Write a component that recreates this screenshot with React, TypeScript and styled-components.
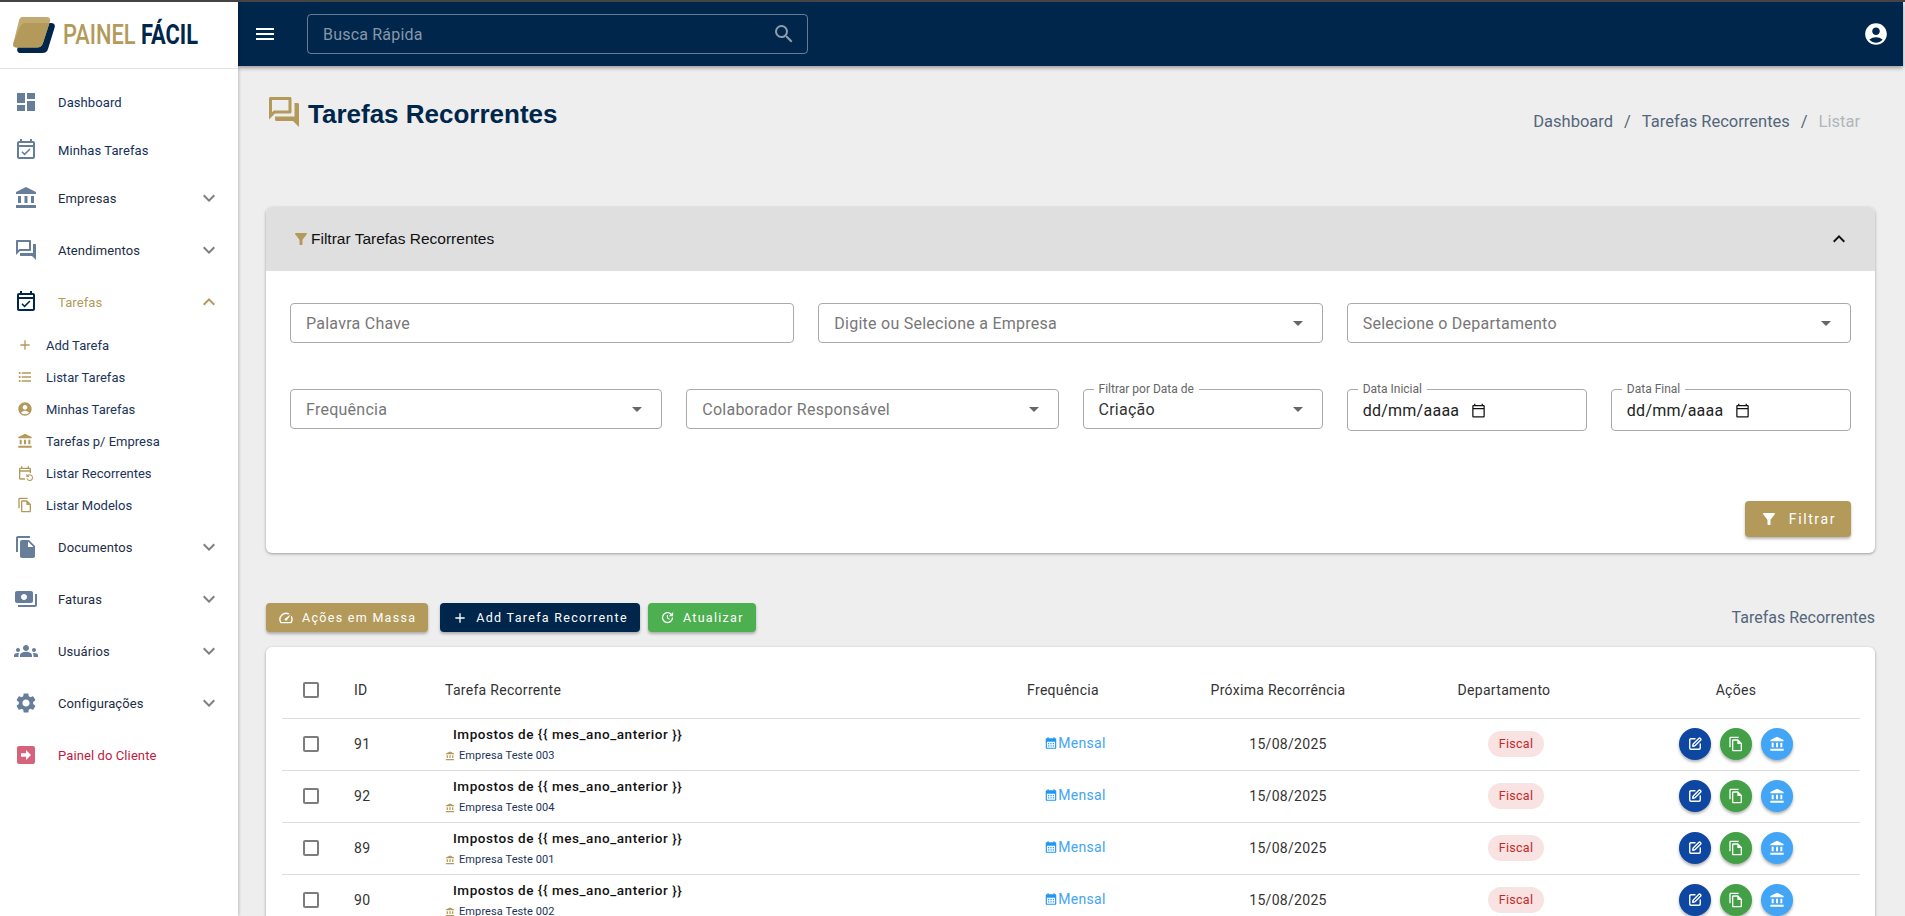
import React from 'react';
import styled, { createGlobalStyle } from 'styled-components';
import {
  MdDashboard,
  MdOutlineEventAvailable,
  MdAccountBalance,
  MdOutlineForum,
  MdAdd,
  MdFormatListBulleted,
  MdAccountCircle,
  MdOutlineEventRepeat,
  MdOutlineFileCopy,
  MdFileCopy,
  MdPayments,
  MdGroups,
  MdSettings,
  MdExpandMore,
  MdExpandLess,
  MdMenu,
  MdSearch,
  MdFilterAlt,
  MdArrowDropDown,
  MdOutlineCalendarToday,
  MdOutlineSpeed,
  MdUpdate,
  MdCalendarMonth,
} from 'react-icons/md';
import { SquarePen } from 'lucide-react';

const gold = '#b39a5b';
const navy = '#00264b';

const GlobalStyle = createGlobalStyle`
  html, body {
    margin: 0;
    height: 100%;
    overflow: hidden;
    background: #eeeeee;
    font-family: Roboto, "Liberation Sans", sans-serif;
  }
  * { box-sizing: border-box; }
`;

const Page = styled.div`
  height: 916px;
  overflow: hidden;
  border-top: 2px solid #444444;
  display: grid;
  grid-template-columns: 238px 1fr;
`;

const Sidebar = styled.aside`
  background: #ffffff;
  height: 914px;
  box-shadow: 1px 0 3px rgba(0, 0, 0, 0.2);
  z-index: 2;
`;

const LogoBar = styled.div`
  height: 67px;
  border-bottom: 1px solid #e2e2e2;
  display: flex;
  align-items: center;
  padding-left: 13px;
  gap: 8px;
  margin-bottom: 9px;
`;

const LogoText = styled.span`
  display: inline-block;
  font-size: 28px;
  font-weight: 500;
  line-height: 1;
  white-space: nowrap;
  color: ${gold};
  transform: scaleX(0.78);
  transform-origin: left center;
  b {
    color: ${navy};
    font-weight: 700;
    margin-left: 7px;
  }
`;

const NavItem = styled.div<{ $gap?: boolean }>`
  height: 48px;
  margin-bottom: ${(p) => (p.$gap ? '4px' : '0')};
  display: flex;
  align-items: center;
  padding: 0 17px 0 14px;
`;

const NavIcon = styled.span<{ $active?: boolean }>`
  width: 24px;
  height: 24px;
  margin-right: 20px;
  flex: none;
  display: flex;
  color: ${(p) => (p.$active ? navy : '#667e99')};
`;

const NavLabel = styled.span<{ $tone?: string }>`
  flex: 1;
  font-size: 13px;
  letter-spacing: 0.1px;
  color: ${(p) => p.$tone ?? '#1d2d44'};
`;

const Chevron = styled.span<{ $active?: boolean }>`
  display: flex;
  color: ${(p) => (p.$active ? gold : '#7f7f7f')};
`;

const SubList = styled.div`
  margin: 3px 0 2px;
`;

const SubItem = styled.div`
  height: 32px;
  display: flex;
  align-items: center;
  padding-left: 17px;
  gap: 13px;
  font-size: 13px;
  color: #1b3358;
  svg {
    color: ${gold};
    flex: none;
  }
`;

const Main = styled.main`
  min-width: 0;
  margin-right: 2px;
`;

const Topbar = styled.header`
  height: 64px;
  background: ${navy};
  box-shadow: 0 2px 4px rgba(0, 0, 0, 0.35);
  display: flex;
  align-items: center;
  padding: 0 14px 0 15px;
  color: #ffffff;
`;

const SearchBox = styled.div`
  width: 501px;
  height: 40px;
  margin-left: 30px;
  border: 1px solid rgba(255, 255, 255, 0.4);
  border-radius: 4px;
  display: flex;
  align-items: center;
  justify-content: space-between;
  padding: 0 11px 0 15px;
  font-size: 16px;
  letter-spacing: 0.2px;
  color: #8797a8;
`;

const UserButton = styled.span`
  margin-left: auto;
  display: flex;
`;

const Content = styled.div`
  padding: 0 28px 0 28px;
`;

const TitleRow = styled.div`
  height: 141px;
  display: flex;
  justify-content: space-between;
  align-items: flex-start;
`;

const PageTitle = styled.h1`
  margin: 32px 0 0;
  display: flex;
  align-items: center;
  gap: 6px;
  font-family: "Liberation Sans", Arial, sans-serif;
  font-size: 26px;
  font-weight: 700;
  color: ${navy};
  svg {
    color: ${gold};
    flex: none;
    margin-top: -4px;
  }
`;

const Breadcrumb = styled.nav`
  margin: 46px 15px 0 0;
  display: flex;
  gap: 11px;
  font-size: 16.5px;
  color: #54667a;
`;

const Crumb = styled.span<{ $muted?: boolean }>`
  color: ${(p) => (p.$muted ? '#b0b6bc' : 'inherit')};
`;

const Card = styled.section`
  background: #ffffff;
  border-radius: 6px;
  box-shadow: 0 1px 3px rgba(0, 0, 0, 0.35);
`;

const CardHead = styled.div`
  height: 64px;
  background: #dfdfdf;
  border-radius: 6px 6px 0 0;
  display: flex;
  align-items: center;
  padding: 0 24px 0 26px;
  font-family: "Liberation Sans", Arial, sans-serif;
  font-size: 15.5px;
  color: #111111;
  svg:first-child {
    color: ${gold};
    flex: none;
  }
  span {
    flex: 1;
    margin-left: 1px;
  }
`;

const FilterBody = styled.div`
  padding: 32px 24px 16px;
`;

const FieldGrid = styled.div`
  display: grid;
  grid-template-columns: repeat(12, 1fr);
  gap: 46px 24px;
  align-items: start;
`;

const Field = styled.div<{ $span: number; $tall?: boolean; $focus?: boolean }>`
  grid-column: span ${(p) => p.$span};
  position: relative;
  height: ${(p) => (p.$tall ? '42px' : '40px')};
  border: 1px solid #aaaaaa;
  border-radius: 4px;
  display: flex;
  align-items: center;
  justify-content: space-between;
  padding: 0 12px 0 15px;
  font-size: 16px;
  letter-spacing: 0.25px;
  color: #777777;
  svg {
    color: #666666;
    flex: none;
  }
`;

const FieldValue = styled.span`
  color: #333333;
`;

const DateValue = styled.span`
  display: flex;
  align-items: center;
  gap: 12px;
  color: #222222;
  svg {
    color: #111111;
  }
`;

const FloatLabel = styled.label`
  position: absolute;
  top: -8px;
  left: 10px;
  padding: 0 5px;
  background: #ffffff;
  font-size: 12px;
  line-height: 15px;
  letter-spacing: 0;
  color: #666666;
`;

const FilterActions = styled.div`
  margin-top: 70px;
  display: flex;
  justify-content: flex-end;
`;

const ActionButton = styled.button<{ $bg: string; $big?: boolean }>`
  height: ${(p) => (p.$big ? '36px' : '29px')};
  border: 0;
  border-radius: 4px;
  background: ${(p) => p.$bg};
  color: #ffffff;
  display: inline-flex;
  align-items: center;
  gap: ${(p) => (p.$big ? '11px' : '8px')};
  padding: 0 ${(p) => (p.$big ? '15px' : '12px')};
  font-family: Roboto, sans-serif;
  font-size: ${(p) => (p.$big ? '14px' : '12.5px')};
  letter-spacing: ${(p) => (p.$big ? '1.6px' : '1.3px')};
  box-shadow: 0 2px 3px rgba(0, 0, 0, 0.28);
`;

const ToolbarRow = styled.div`
  margin-top: 50px;
  height: 29px;
  display: flex;
  align-items: center;
  gap: 8px;
  & > button:first-child {
    margin-right: 4px;
  }
`;

const ToolbarTitle = styled.span`
  margin-left: auto;
  font-size: 16px;
  color: #54667a;
`;

const TableCard = styled(Card)`
  margin-top: 15px;
  padding: 15px 15px 0 16px;
`;

const Table = styled.table`
  width: 100%;
  table-layout: fixed;
  border-collapse: collapse;
  font-size: 14px;
  letter-spacing: 0.3px;
  color: #333333;
`;

const Th = styled.th<{ $left?: boolean }>`
  height: 56px;
  font-weight: 400;
  text-align: ${(p) => (p.$left ? 'left' : 'center')};
  border-bottom: 1px solid #dddddd;
  padding: 0;
`;

const Td = styled.td<{ $shift?: number; $left?: boolean }>`
  height: 52px;
  text-align: ${(p) => (p.$left ? 'left' : 'center')};
  border-bottom: 1px solid #dddddd;
  padding: 0 0 0 ${(p) => p.$shift ?? 0}px;
`;

const Check = styled.span`
  display: block;
  width: 16px;
  height: 16px;
  margin-left: 21px;
  border: 2px solid #7d7d7d;
  border-radius: 2px;
`;

const TaskName = styled.div`
  margin-left: 8px;
  font-size: 13.5px;
  font-weight: 500;
  letter-spacing: 0.55px;
  color: #111111;
`;

const TaskCompany = styled.div`
  margin-top: 7px;
  display: flex;
  align-items: center;
  gap: 4px;
  font-size: 11px;
  letter-spacing: 0.1px;
  color: #1b3358;
  svg {
    color: ${gold};
  }
`;

const Frequency = styled.span`
  display: inline-flex;
  align-items: center;
  color: #42a5f5;
  svg {
    color: #2196f3;
  }
`;

const Chip = styled.span`
  display: inline-block;
  height: 26px;
  line-height: 26px;
  padding: 0 11px;
  border-radius: 13px;
  background: #f8e2e2;
  color: #c62828;
  font-size: 12.5px;
`;

const RoundRow = styled.div`
  display: flex;
  justify-content: center;
  gap: 9px;
`;

const RoundButton = styled.span<{ $bg: string }>`
  width: 32px;
  height: 32px;
  border-radius: 50%;
  background: ${(p) => p.$bg};
  color: #ffffff;
  display: flex;
  align-items: center;
  justify-content: center;
  box-shadow: 0 2px 3px rgba(0, 0, 0, 0.3);
`;

const ClientIcon = () => (
  <svg width="24" height="24" viewBox="0 0 24 24">
    <rect x="3" y="3" width="18" height="18" rx="2" fill="#d6637c" />
    <path d="M7 10.2h5V7l5 5-5 5v-3.2H7z" fill="#ffffff" />
  </svg>
);

const LogoMark = () => (
  <svg width="42" height="37" viewBox="0 0 42 37">
    <path d="M12 6h26c3 0 4.500 2 3.600 4.500L35 32c-1 3-3 4-6 4H8c-3 0-4.500-2-3.600-4.500z" fill={navy} />
    <path d="M9.500 0h24c3 0 4.300 1.800 3.500 4.300L30 26c-1 3-3 4.500-6 4.500H3.500C.8 30.500-.5 28.500.4 26L6 3.500C6.600 1.200 7.600 0 9.500 0z" fill="#c2ab70" />
    <path d="M13 6h23.500L30 26c-1 3-3 4.500-6 4.500H3.500C.8 30.500-.5 28.500.4 26L7 10c1-2.500 3-4 6-4z" fill="#b39a5b" />
  </svg>
);

const mainNav = [
  { label: 'Dashboard', icon: <MdDashboard size={24} />, tone: '#12305a' },
  { label: 'Minhas Tarefas', icon: <MdOutlineEventAvailable size={24} />, tone: '#12305a' },
  { label: 'Empresas', icon: <MdAccountBalance size={24} />, more: true },
  { label: 'Atendimentos', icon: <MdOutlineForum size={24} />, more: true },
];

const tarefasSub = [
  { label: 'Add Tarefa', icon: <MdAdd size={16} /> },
  { label: 'Listar Tarefas', icon: <MdFormatListBulleted size={16} /> },
  { label: 'Minhas Tarefas', icon: <MdAccountCircle size={16} /> },
  { label: 'Tarefas p/ Empresa', icon: <MdAccountBalance size={16} /> },
  { label: 'Listar Recorrentes', icon: <MdOutlineEventRepeat size={16} /> },
  { label: 'Listar Modelos', icon: <MdOutlineFileCopy size={16} /> },
];

const lowerNav = [
  { label: 'Documentos', icon: <MdFileCopy size={24} /> },
  { label: 'Faturas', icon: <MdPayments size={24} /> },
  { label: 'Usuários', icon: <MdGroups size={24} /> },
  { label: 'Configurações', icon: <MdSettings size={24} /> },
];

const tasks = [
  { id: 91, company: 'Empresa Teste 003' },
  { id: 92, company: 'Empresa Teste 004' },
  { id: 89, company: 'Empresa Teste 001' },
  { id: 90, company: 'Empresa Teste 002' },
];

const columnWidths = [58, 105, 521, 194, 236, 216, 248];

const App: React.FC = () => {
  return (
    <>
      <GlobalStyle />
      <Page>
        <Sidebar>
          <LogoBar>
            <LogoMark />
            <LogoText>
              PAINEL<b>FÁCIL</b>
            </LogoText>
          </LogoBar>

          {mainNav.map((item) => (
            <NavItem key={item.label} $gap={item.more}>
              <NavIcon>{item.icon}</NavIcon>
              <NavLabel $tone={item.tone}>{item.label}</NavLabel>
              {item.more && (
                <Chevron>
                  <MdExpandMore size={24} />
                </Chevron>
              )}
            </NavItem>
          ))}

          <NavItem>
            <NavIcon $active>
              <MdOutlineEventAvailable size={24} />
            </NavIcon>
            <NavLabel $tone={gold}>Tarefas</NavLabel>
            <Chevron $active>
              <MdExpandLess size={24} />
            </Chevron>
          </NavItem>
          <SubList>
            {tarefasSub.map((item) => (
              <SubItem key={item.label}>
                {item.icon}
                {item.label}
              </SubItem>
            ))}
          </SubList>

          {lowerNav.map((item) => (
            <NavItem key={item.label} $gap>
              <NavIcon>{item.icon}</NavIcon>
              <NavLabel>{item.label}</NavLabel>
              <Chevron>
                <MdExpandMore size={24} />
              </Chevron>
            </NavItem>
          ))}
          <NavItem>
            <NavIcon>
              <ClientIcon />
            </NavIcon>
            <NavLabel $tone="#c2183f">Painel do Cliente</NavLabel>
          </NavItem>
        </Sidebar>

        <Main>
          <Topbar>
            <MdMenu size={24} />
            <SearchBox>
              Busca Rápida
              <MdSearch size={24} color="#8f9dad" />
            </SearchBox>
            <UserButton>
              <MdAccountCircle size={26} />
            </UserButton>
          </Topbar>

          <Content>
            <TitleRow>
              <PageTitle>
                <MdOutlineForum size={36} />
                Tarefas Recorrentes
              </PageTitle>
              <Breadcrumb>
                <Crumb>Dashboard</Crumb>
                <Crumb>/</Crumb>
                <Crumb>Tarefas Recorrentes</Crumb>
                <Crumb>/</Crumb>
                <Crumb $muted>Listar</Crumb>
              </Breadcrumb>
            </TitleRow>

            <Card>
              <CardHead>
                <MdFilterAlt size={18} />
                <span>Filtrar Tarefas Recorrentes</span>
                <MdExpandLess size={24} color="#111111" />
              </CardHead>
              <FilterBody>
                <FieldGrid>
                  <Field $span={4}>Palavra Chave</Field>
                  <Field $span={4}>
                    Digite ou Selecione a Empresa
                    <MdArrowDropDown size={24} />
                  </Field>
                  <Field $span={4}>
                    Selecione o Departamento
                    <MdArrowDropDown size={24} />
                  </Field>
                  <Field $span={3}>
                    Frequência
                    <MdArrowDropDown size={24} />
                  </Field>
                  <Field $span={3}>
                    Colaborador Responsável
                    <MdArrowDropDown size={24} />
                  </Field>
                  <Field $span={2}>
                    <FloatLabel>Filtrar por Data de</FloatLabel>
                    <FieldValue>Criação</FieldValue>
                    <MdArrowDropDown size={24} />
                  </Field>
                  <Field $span={2} $tall>
                    <FloatLabel>Data Inicial</FloatLabel>
                    <DateValue>
                      dd/mm/aaaa
                      <MdOutlineCalendarToday size={15} />
                    </DateValue>
                  </Field>
                  <Field $span={2} $tall>
                    <FloatLabel>Data Final</FloatLabel>
                    <DateValue>
                      dd/mm/aaaa
                      <MdOutlineCalendarToday size={15} />
                    </DateValue>
                  </Field>
                </FieldGrid>
                <FilterActions>
                  <ActionButton $bg={gold} $big>
                    <MdFilterAlt size={18} />
                    Filtrar
                  </ActionButton>
                </FilterActions>
              </FilterBody>
            </Card>

            <ToolbarRow>
              <ActionButton $bg={gold}>
                <MdOutlineSpeed size={16} />
                Ações em Massa
              </ActionButton>
              <ActionButton $bg={navy}>
                <MdAdd size={16} />
                Add Tarefa Recorrente
              </ActionButton>
              <ActionButton $bg="#4caf50">
                <MdUpdate size={15} />
                Atualizar
              </ActionButton>
              <ToolbarTitle>Tarefas Recorrentes</ToolbarTitle>
            </ToolbarRow>

            <TableCard>
              <Table>
                <colgroup>
                  {columnWidths.map((w, i) => (
                    <col key={i} style={{ width: w }} />
                  ))}
                </colgroup>
                <thead>
                  <tr>
                    <Th $left>
                      <Check />
                    </Th>
                    <Th $left style={{ paddingLeft: 14 }}>ID</Th>
                    <Th $left>Tarefa Recorrente</Th>
                    <Th>Frequência</Th>
                    <Th>Próxima Recorrência</Th>
                    <Th>Departamento</Th>
                    <Th>Ações</Th>
                  </tr>
                </thead>
                <tbody>
                  {tasks.map((task) => (
                    <tr key={task.id}>
                      <Td $left>
                        <Check />
                      </Td>
                      <Td $left $shift={14}>
                        {task.id}
                      </Td>
                      <Td $left>
                        <TaskName>{'Impostos de {{ mes_ano_anterior }}'}</TaskName>
                        <TaskCompany>
                          <MdAccountBalance size={10} />
                          {task.company}
                        </TaskCompany>
                      </Td>
                      <Td $shift={24}>
                        <Frequency>
                          <MdCalendarMonth size={14} />
                          Mensal
                        </Frequency>
                      </Td>
                      <Td $shift={20}>15/08/2025</Td>
                      <Td $shift={24}>
                        <Chip>Fiscal</Chip>
                      </Td>
                      <Td>
                        <RoundRow>
                          <RoundButton $bg="#0d47a1">
                            <SquarePen size={14} strokeWidth={2.4} />
                          </RoundButton>
                          <RoundButton $bg="#43a047">
                            <MdOutlineFileCopy size={16} />
                          </RoundButton>
                          <RoundButton $bg="#42a5f5">
                            <MdAccountBalance size={16} />
                          </RoundButton>
                        </RoundRow>
                      </Td>
                    </tr>
                  ))}
                </tbody>
              </Table>
            </TableCard>
          </Content>
        </Main>
      </Page>
    </>
  );
};

export default App;
